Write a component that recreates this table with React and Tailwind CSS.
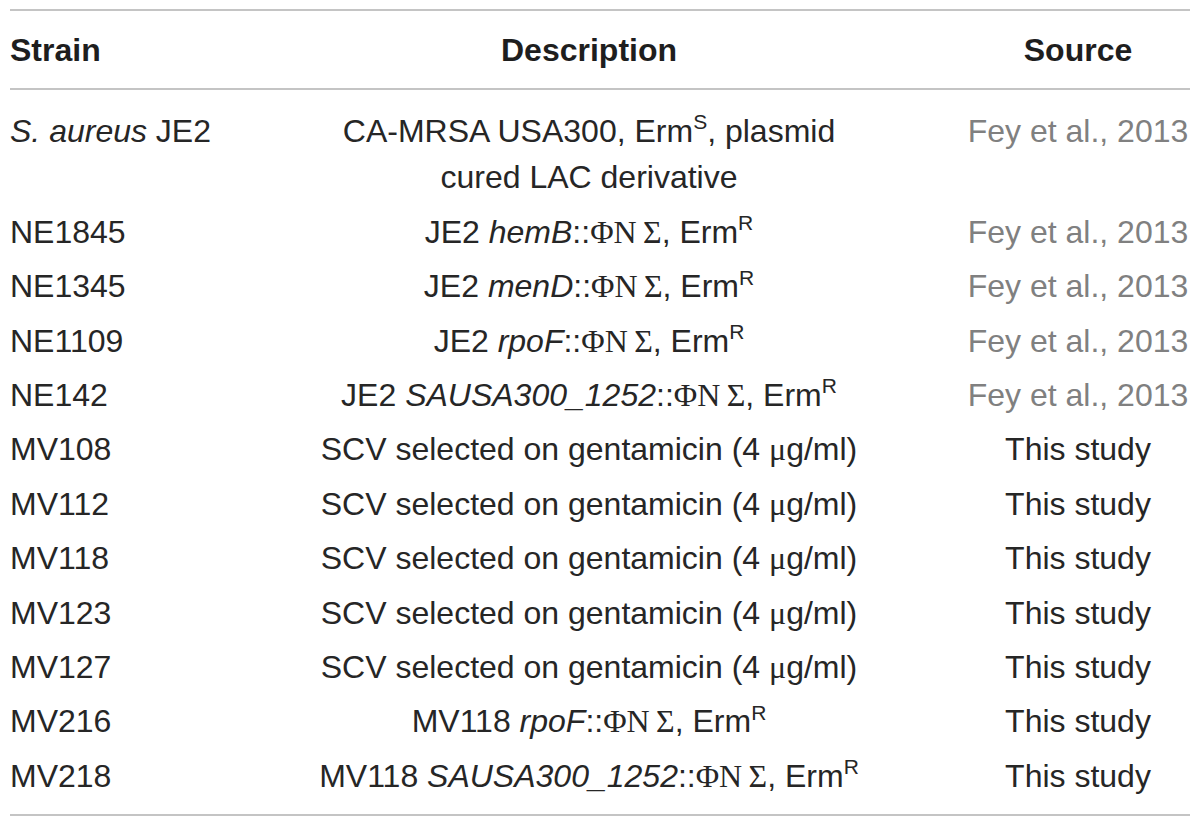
import React from 'react';

// ΦNΣ transposon marker, set in a serif face as in the print table
const Tn = () => (
    <span className="font-['Liberation_Serif',serif]">ΦN&#8201;Σ</span>
);

const ErmR = () => (
    <>
        , Erm<sup className="text-[21px] top-[-0.6em]">R</sup>
    </>
);

const Mu = () => <span className="font-['Liberation_Serif',serif]">μ</span>;

const scv = <>SCV selected on gentamicin (4 <Mu />g/ml)</>;

const rows = [
    {
        strain: <><i>S. aureus</i> JE2</>,
        desc: <>CA-MRSA USA300, Erm<sup className="text-[21px] top-[-0.6em]">S</sup>, plasmid<br />cured LAC derivative</>,
        source: 'Fey et al., 2013',
        muted: true,
    },
    { strain: 'NE1845', desc: <>JE2 <i>hemB</i>::<Tn /><ErmR /></>, source: 'Fey et al., 2013', muted: true },
    { strain: 'NE1345', desc: <>JE2 <i>menD</i>::<Tn /><ErmR /></>, source: 'Fey et al., 2013', muted: true },
    { strain: 'NE1109', desc: <>JE2 <i>rpoF</i>::<Tn /><ErmR /></>, source: 'Fey et al., 2013', muted: true },
    { strain: 'NE142', desc: <>JE2 <i>SAUSA300_1252</i>::<Tn /><ErmR /></>, source: 'Fey et al., 2013', muted: true },
    { strain: 'MV108', desc: scv, source: 'This study' },
    { strain: 'MV112', desc: scv, source: 'This study' },
    { strain: 'MV118', desc: scv, source: 'This study' },
    { strain: 'MV123', desc: scv, source: 'This study' },
    { strain: 'MV127', desc: scv, source: 'This study' },
    { strain: 'MV216', desc: <>MV118 <i>rpoF</i>::<Tn /><ErmR /></>, source: 'This study' },
    { strain: 'MV218', desc: <>MV118 <i>SAUSA300_1252</i>::<Tn /><ErmR /></>, source: 'This study' },
];

const cols = 'grid grid-cols-[220px_718px_242px]';

export default function App() {
    return (
        <div className="w-[1200px] h-[826px] bg-white pt-[9px] px-[10px] font-['Liberation_Sans',Arial,sans-serif] text-[#262626]">
            <div className="border-t-2 border-b-2 border-[#c4c4c4]">
                {/* Header */}
                <div className={`${cols} h-[79px] items-center border-b-2 border-[#c4c4c4] text-[32px] font-bold text-[#1e1e1e]`}>
                    <div>Strain</div>
                    <div className="text-center">Description</div>
                    <div className="text-center pl-[18px]">Source</div>
                </div>

                {/* Body */}
                <div className="pt-[14px] pb-[11px] text-[32px] leading-[46.4px]">
                    {rows.map((r, i) => (
                        <div key={i} className={`${cols} py-1`}>
                            <div className="whitespace-nowrap">{r.strain}</div>
                            <div className="text-center whitespace-nowrap">{r.desc}</div>
                            <div className={`text-center pl-[18px] whitespace-nowrap ${r.muted ? 'text-[#808080]' : ''}`}>
                                {r.source}
                            </div>
                        </div>
                    ))}
                </div>
            </div>
        </div>
    );
}
